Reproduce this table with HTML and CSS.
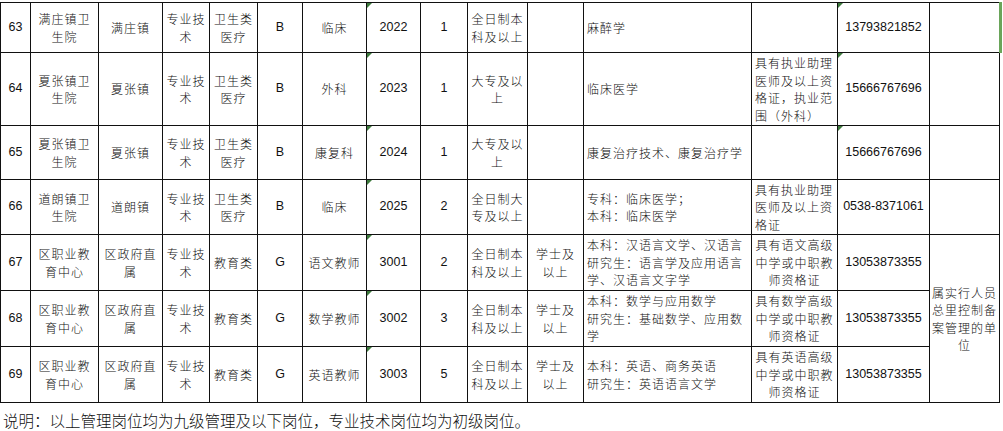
FILE: index.html
```html
<!DOCTYPE html>
<html lang="zh-CN">
<head>
<meta charset="utf-8">
<title>岗位表</title>
<link rel="stylesheet" href="styles.css">
</head>
<body>
<div class="sheet">
  <!-- 63 -->
  <div class="c n">63</div>
  <div class="c"><span class="ln">满庄镇卫</span><span class="ln">生院</span></div>
  <div class="c">满庄镇</div>
  <div class="c"><span class="ln">专业技</span><span class="ln">术</span></div>
  <div class="c"><span class="ln">卫生类</span><span class="ln">医疗</span></div>
  <div class="c n">B</div>
  <div class="c">临床</div>
  <div class="c n tri">2022</div>
  <div class="c n">1</div>
  <div class="c"><span class="ln">全日制本</span><span class="ln">科及以上</span></div>
  <div class="c"></div>
  <div class="c l">麻醉学</div>
  <div class="c l"></div>
  <div class="c n tri">13793821852</div>
  <div class="c sel"></div>
  <!-- 64 -->
  <div class="c n">64</div>
  <div class="c"><span class="ln">夏张镇卫</span><span class="ln">生院</span></div>
  <div class="c">夏张镇</div>
  <div class="c"><span class="ln">专业技</span><span class="ln">术</span></div>
  <div class="c"><span class="ln">卫生类</span><span class="ln">医疗</span></div>
  <div class="c n">B</div>
  <div class="c">外科</div>
  <div class="c n tri">2023</div>
  <div class="c n">1</div>
  <div class="c"><span class="ln">大专及以</span><span class="ln">上</span></div>
  <div class="c"></div>
  <div class="c l">临床医学</div>
  <div class="c l"><span class="ln">具有执业助理</span><span class="ln">医师及以上资</span><span class="ln">格证，执业范</span><span class="ln">围（外科）</span></div>
  <div class="c n tri">15666767696</div>
  <div class="c"></div>
  <!-- 65 -->
  <div class="c n">65</div>
  <div class="c"><span class="ln">夏张镇卫</span><span class="ln">生院</span></div>
  <div class="c">夏张镇</div>
  <div class="c"><span class="ln">专业技</span><span class="ln">术</span></div>
  <div class="c"><span class="ln">卫生类</span><span class="ln">医疗</span></div>
  <div class="c n">B</div>
  <div class="c">康复科</div>
  <div class="c n tri">2024</div>
  <div class="c n">1</div>
  <div class="c"><span class="ln">大专及以</span><span class="ln">上</span></div>
  <div class="c"></div>
  <div class="c l">康复治疗技术、康复治疗学</div>
  <div class="c l"></div>
  <div class="c n tri">15666767696</div>
  <div class="c"></div>
  <!-- 66 -->
  <div class="c n">66</div>
  <div class="c"><span class="ln">道朗镇卫</span><span class="ln">生院</span></div>
  <div class="c">道朗镇</div>
  <div class="c"><span class="ln">专业技</span><span class="ln">术</span></div>
  <div class="c"><span class="ln">卫生类</span><span class="ln">医疗</span></div>
  <div class="c n">B</div>
  <div class="c">临床</div>
  <div class="c n tri">2025</div>
  <div class="c n">2</div>
  <div class="c"><span class="ln">全日制大</span><span class="ln">专及以上</span></div>
  <div class="c"></div>
  <div class="c l"><span class="ln">专科：临床医学；</span><span class="ln">本科：临床医学</span></div>
  <div class="c l"><span class="ln">具有执业助理</span><span class="ln">医师及以上资</span><span class="ln">格证</span></div>
  <div class="c n">0538-8371061</div>
  <div class="c"></div>
  <!-- 67 -->
  <div class="c n">67</div>
  <div class="c"><span class="ln">区职业教</span><span class="ln">育中心</span></div>
  <div class="c"><span class="ln">区政府直</span><span class="ln">属</span></div>
  <div class="c"><span class="ln">专业技</span><span class="ln">术</span></div>
  <div class="c">教育类</div>
  <div class="c n">G</div>
  <div class="c">语文教师</div>
  <div class="c n tri">3001</div>
  <div class="c n">2</div>
  <div class="c"><span class="ln">全日制本</span><span class="ln">科及以上</span></div>
  <div class="c"><span class="ln">学士及</span><span class="ln">以上</span></div>
  <div class="c l"><span class="ln">本科：汉语言文学、汉语言</span><span class="ln">研究生：语言学及应用语言</span><span class="ln">学、汉语言文字学</span></div>
  <div class="c"><span class="ln">具有语文高级</span><span class="ln">中学或中职教</span><span class="ln">师资格证</span></div>
  <div class="c n">13053873355</div>
  <div class="c span3"><span class="ln">属实行人员</span><span class="ln">总里控制备</span><span class="ln">案管理的单</span><span class="ln">位</span></div>
  <!-- 68 -->
  <div class="c n">68</div>
  <div class="c"><span class="ln">区职业教</span><span class="ln">育中心</span></div>
  <div class="c"><span class="ln">区政府直</span><span class="ln">属</span></div>
  <div class="c"><span class="ln">专业技</span><span class="ln">术</span></div>
  <div class="c">教育类</div>
  <div class="c n">G</div>
  <div class="c">数学教师</div>
  <div class="c n tri">3002</div>
  <div class="c n">3</div>
  <div class="c"><span class="ln">全日制本</span><span class="ln">科及以上</span></div>
  <div class="c"><span class="ln">学士及</span><span class="ln">以上</span></div>
  <div class="c l"><span class="ln">本科：数学与应用数学</span><span class="ln">研究生：基础数学、应用数</span><span class="ln">学</span></div>
  <div class="c"><span class="ln">具有数学高级</span><span class="ln">中学或中职教</span><span class="ln">师资格证</span></div>
  <div class="c n">13053873355</div>
  <!-- 69 -->
  <div class="c n">69</div>
  <div class="c"><span class="ln">区职业教</span><span class="ln">育中心</span></div>
  <div class="c"><span class="ln">区政府直</span><span class="ln">属</span></div>
  <div class="c"><span class="ln">专业技</span><span class="ln">术</span></div>
  <div class="c">教育类</div>
  <div class="c n">G</div>
  <div class="c">英语教师</div>
  <div class="c n tri">3003</div>
  <div class="c n">5</div>
  <div class="c"><span class="ln">全日制本</span><span class="ln">科及以上</span></div>
  <div class="c"><span class="ln">学士及</span><span class="ln">以上</span></div>
  <div class="c l"><span class="ln">本科：英语、商务英语</span><span class="ln">研究生：英语语言文学</span></div>
  <div class="c"><span class="ln">具有英语高级</span><span class="ln">中学或中职教</span><span class="ln">师资格证</span></div>
  <div class="c n">13053873355</div>
</div>
<p class="note">说明：以上管理岗位均为九级管理及以下岗位，专业技术岗位均为初级岗位。</p>
</body>
</html>
```
FILE: styles.css
```css
html, body {
  margin: 0;
  padding: 0;
  background: #ffffff;
}

body {
  font-family: "Noto Sans CJK SC", "Noto Sans", sans-serif;
  font-weight: 300;
  color: #111111;
  padding-top: 2px;
}

.sheet {
  display: grid;
  grid-template-columns: 30px 68px 64px 47px 48px 45px 64px 54px 47px 60px 56px 168px 86px 92px 70px;
  grid-template-rows: 50px 73px 54px 55px 56px 56px 56px;
  width: max-content;
  border-left: 1px solid #111;
  border-top: 1px solid #111;
}

.c {
  position: relative;
  display: flex;
  flex-direction: column;
  align-items: center;
  justify-content: center;
  text-align: center;
  border-right: 1px solid #111;
  border-bottom: 1px solid #111;
  font-size: 12px;
  letter-spacing: 1px;
  line-height: 17.5px;
  white-space: nowrap;
}

.ln {
  display: block;
  height: 17.5px;
  line-height: 17.5px;
}

.l {
  align-items: flex-start;
  text-align: left;
  padding-left: 3px;
}

.n {
  font-family: "Liberation Sans", Arial, sans-serif;
  font-weight: 400;
  font-size: 12.5px;
  letter-spacing: 0;
}

.tri::before {
  content: "";
  position: absolute;
  top: 0;
  left: 0;
  border-top: 5px solid #3d7a3d;
  border-right: 5px solid transparent;
}

.sel::after {
  content: "";
  position: absolute;
  top: -1px;
  bottom: -1px;
  right: -3px;
  width: 3px;
  background: #6aa55a;
}

.span3 {
  grid-row: span 3;
}

.note {
  margin: 7px 0 0 0;
  padding-left: 3px;
  font-size: 15.5px;
  line-height: 20px;
  white-space: nowrap;
}
```
